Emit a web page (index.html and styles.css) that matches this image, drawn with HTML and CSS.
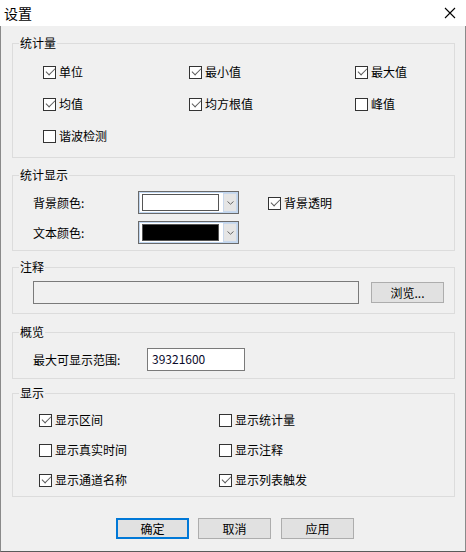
FILE: index.html
```html
<!DOCTYPE html>
<html lang="zh-CN">
<head>
<meta charset="utf-8">
<title>设置</title>
<link rel="stylesheet" href="styles.css">
</head>
<body>
<div class="window">
  <div class="titlebar">
    <span class="title">设置</span>
    <svg class="close" width="12" height="12" viewBox="0 0 12 12"><path d="M1 1L11 11M11 1L1 11" stroke="#000" stroke-width="1.1" fill="none"/></svg>
  </div>
  <div class="client">
    <div class="group g1">
      <span class="gtitle">统计量</span>
      <div class="grid3">
        <label class="cb"><span class="box on"></span>单位</label>
        <label class="cb"><span class="box on"></span>最小值</label>
        <label class="cb"><span class="box on"></span>最大值</label>
        <label class="cb"><span class="box on"></span>均值</label>
        <label class="cb"><span class="box on"></span>均方根值</label>
        <label class="cb"><span class="box"></span>峰值</label>
        <label class="cb"><span class="box"></span>谐波检测</label>
      </div>
    </div>
    <div class="group g2">
      <span class="gtitle">统计显示</span>
      <div class="colorgrid">
        <span class="lbl">背景颜色:</span>
        <div class="combo"><span class="swatch white"></span><span class="drop"><svg width="7" height="4" viewBox="0 0 7 4"><path d="M0.5 0.5L3.5 3.2L6.5 0.5" stroke="#666" fill="none"/></svg></span></div>
        <label class="cb transp"><span class="box on"></span>背景透明</label>
        <span class="lbl">文本颜色:</span>
        <div class="combo"><span class="swatch black"></span><span class="drop"><svg width="7" height="4" viewBox="0 0 7 4"><path d="M0.5 0.5L3.5 3.2L6.5 0.5" stroke="#666" fill="none"/></svg></span></div>
      </div>
    </div>
    <div class="group g3">
      <span class="gtitle">注释</span>
      <div class="row">
        <div class="textbox disabled"></div>
        <button class="btn browse">浏览...</button>
      </div>
    </div>
    <div class="group g4">
      <span class="gtitle">概览</span>
      <div class="row">
        <span class="lbl range">最大可显示范围:</span>
        <div class="textbox num">39321600</div>
      </div>
    </div>
    <div class="group g5">
      <span class="gtitle">显示</span>
      <div class="grid2">
        <label class="cb"><span class="box on"></span>显示区间</label>
        <label class="cb"><span class="box"></span>显示统计量</label>
        <label class="cb"><span class="box"></span>显示真实时间</label>
        <label class="cb"><span class="box"></span>显示注释</label>
        <label class="cb"><span class="box on"></span>显示通道名称</label>
        <label class="cb"><span class="box on"></span>显示列表触发</label>
      </div>
    </div>
    <div class="buttons">
      <button class="btn dlg default">确定</button>
      <button class="btn dlg">取消</button>
      <button class="btn dlg last">应用</button>
    </div>
  </div>
</div>
</body>
</html>
```
FILE: styles.css
```css
* { box-sizing: border-box; }
html, body { margin: 0; padding: 0; }
body {
  font-family: "Noto Sans CJK SC", "Noto Sans", sans-serif;
  font-size: 12px;
  line-height: 16px;
  color: #000;
  background: #f0f0f0;
}
.window {
  width: 466px;
  height: 552px;
  display: flex;
  flex-direction: column;
}
.titlebar {
  height: 26px;
  background: #fff;
  display: flex;
  align-items: center;
  justify-content: space-between;
  padding: 0 10px 0 4px;
}
.title { font-size: 14px; line-height: 18px; }
.close { display: block; }
.client {
  flex: 1;
  background: #f0f0f0;
  border-left: 1px solid #8a8a8a;
  border-right: 1px solid #8a8a8a;
  border-bottom: 1px solid #5a5a5a;
  padding: 17px 10px 0 11px;
  display: flex;
  flex-direction: column;
}
.group {
  position: relative;
  border: 1px solid #dcdcdc;
}
.gtitle {
  position: absolute;
  top: -9px;
  left: 6px;
  padding: 0 1px;
  background: #f0f0f0;
  line-height: 16px;
}
.g1 { height: 115px; padding: 12px 0 0 30px; }
.g2 { height: 76px; margin-top: 17px; padding: 15px 0 0 20px; }
.g3 { height: 47px; margin-top: 16px; padding: 13px 0 0 20px; }
.g4 { height: 47px; margin-top: 18px; padding: 15px 0 0 20px; }
.g5 { height: 104px; margin-top: 14px; padding: 11px 0 0 26px; }

.grid3 {
  display: grid;
  grid-template-columns: 146px 166px auto;
  grid-auto-rows: 32px;
}
.grid2 {
  display: grid;
  grid-template-columns: 180px auto;
  grid-auto-rows: 30px;
}
.cb {
  display: flex;
  align-items: center;
  gap: 3px;
  white-space: nowrap;
}
.box {
  width: 13px;
  height: 13px;
  border: 1px solid #333;
  background: #fff;
  flex: none;
  position: relative;
}
.box.on::after {
  content: "";
  position: absolute;
  left: 1.5px;
  top: 1.5px;
  width: 8px;
  height: 4px;
  border-left: 1.5px solid #5c5c5c;
  border-bottom: 1.5px solid #5c5c5c;
  transform: rotate(-45deg);
  transform-origin: center;
}

.colorgrid {
  display: grid;
  grid-template-columns: 105px 101px auto;
  grid-auto-rows: 23px;
  row-gap: 7px;
  align-items: center;
}
.lbl { white-space: nowrap; }
.combo {
  width: 101px;
  height: 23px;
  border: 1px solid #6a6a6a;
  box-shadow: inset 0 0 0 1px #c0d6f0;
  background: #fff;
  display: flex;
  align-items: stretch;
  padding: 2px 1px 2px 3px;
  gap: 4px;
}
.swatch {
  width: 77px;
  border: 1px solid #555;
}
.swatch.white { background: #fff; }
.swatch.black { background: #000; }
.drop {
  width: 14px;
  margin: -1px 0;
  background: #e5e5e5;
  border: 1px solid #c9d8ec;
  display: flex;
  align-items: center;
  justify-content: center;
}
.drop svg { display: block; }
.transp { margin-left: 29px; align-self: start; margin-top: 4px; }

.row { display: flex; align-items: flex-start; }
.textbox {
  height: 23px;
  border: 1px solid #7a7a7a;
  background: #fff;
}
.textbox.disabled { width: 326px; background: #f0f0f0; }
.btn {
  font: inherit;
  color: #000;
  background: #e1e1e1;
  border: 1px solid #adadad;
  padding: 0;
  height: 21px;
  width: 73px;
  line-height: 16px;
}
.browse { margin-left: 12px; margin-top: 1px; }
.g4 .row { align-items: center; }
.range { width: 114px; }
.textbox.num {
  width: 98px;
  padding: 0 0 0 4px;
  line-height: 20px;
  color: #0a0a2a;
}
.buttons {
  margin-top: 21px;
  display: flex;
  padding-left: 104px;
  gap: 9px;
}
.dlg { height: 21px; }
.default { border: 2px solid #0078d7; }
.last { margin-left: 1px; }
```
